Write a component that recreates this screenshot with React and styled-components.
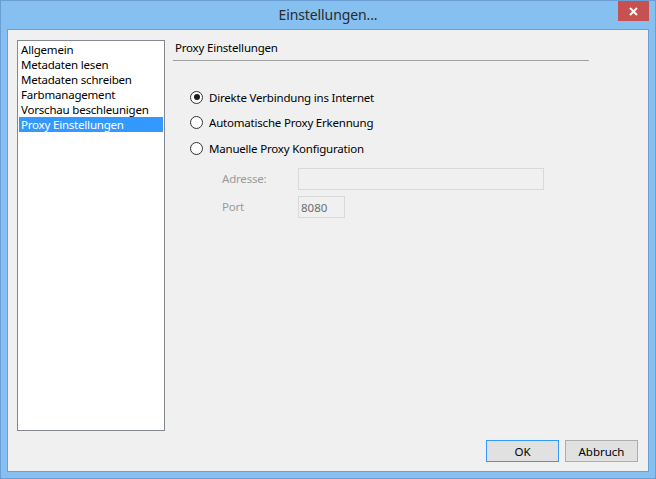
import React, { useState } from "react";
import styled, { createGlobalStyle } from "styled-components";

const GlobalStyle = createGlobalStyle`
  html, body {
    margin: 0;
    padding: 0;
    background: #85c0f1;
  }
  * {
    box-sizing: border-box;
  }
`;

const pages = [
  "Allgemein",
  "Metadaten lesen",
  "Metadaten schreiben",
  "Farbmanagement",
  "Vorschau beschleunigen",
  "Proxy Einstellungen",
];

const modes = [
  "Direkte Verbindung ins Internet",
  "Automatische Proxy Erkennung",
  "Manuelle Proxy Konfiguration",
];

const App = () => {
  const [page, setPage] = useState(5);
  const [mode, setMode] = useState(0);

  return (
    <>
      <GlobalStyle />
      <StWindow>
        <StTitleBar>
          <StTitle>Einstellungen...</StTitle>
          <StClose aria-label="Schließen">
            <svg width="9" height="9" viewBox="0 0 9 9">
              <path d="M1 1L8 8M8 1L1 8" stroke="#fff" strokeWidth="2" />
            </svg>
          </StClose>
        </StTitleBar>
        <StClient>
          <StList>
            {pages.map((p, i) => (
              <StListItem key={p} $selected={i === page} onClick={() => setPage(i)}>
                {p}
              </StListItem>
            ))}
          </StList>
          <StPanel>
            <StHeader>Proxy Einstellungen</StHeader>
            <StRadioGroup>
              {modes.map((m, i) => (
                <StRadioRow key={m} onClick={() => setMode(i)}>
                  <StRadio $checked={i === mode} />
                  <span>{m}</span>
                </StRadioRow>
              ))}
            </StRadioGroup>
            <StFields>
              <StFieldLabel>Adresse:</StFieldLabel>
              <StInput $width={246} disabled defaultValue="" />
              <StFieldLabel>Port</StFieldLabel>
              <StInput $width={47} disabled defaultValue="8080" />
            </StFields>
          </StPanel>
          <StFooter>
            <StButton $default>OK</StButton>
            <StButton>Abbruch</StButton>
          </StFooter>
        </StClient>
      </StWindow>
    </>
  );
};

export default App;

const StWindow = styled.div`
  width: 656px;
  height: 479px;
  border: 1px solid #6a9ed4;
  background: #85c0f1;
  padding: 0 6px 6px 6px;
  display: flex;
  flex-direction: column;
  font-family: "Noto Sans", "Open Sans", sans-serif;
  font-size: 11.5px;
  letter-spacing: -0.2px;
  color: #000;
`;

const StTitleBar = styled.div`
  position: relative;
  height: 28px;
  display: flex;
  align-items: center;
  justify-content: center;
`;

const StTitle = styled.div`
  font-size: 14px;
  letter-spacing: -0.1px;
  color: #2b2b2b;
  margin-top: -2px;
`;

const StClose = styled.button`
  position: absolute;
  top: 0;
  right: 0;
  width: 31px;
  height: 20px;
  border: none;
  padding: 0;
  background: #c75050;
  display: flex;
  align-items: center;
  justify-content: center;
`;

const StClient = styled.div`
  flex: 1;
  border: 1px solid #6f9fd2;
  background: #f0f0f0;
  padding: 10px 10px 9px 9px;
  display: grid;
  grid-template-columns: 148px 1fr;
  grid-template-rows: 391px 22px;
  row-gap: 9px;
  column-gap: 8px;
`;

const StList = styled.div`
  background: #fff;
  border: 1px solid #828790;
  padding: 1px 1px;
  display: flex;
  flex-direction: column;
`;

const StListItem = styled.div`
  height: 15px;
  line-height: 15px;
  padding-left: 2px;
  white-space: nowrap;
  cursor: default;
  background: ${(p) => (p.$selected ? "#3399ff" : "transparent")};
  color: ${(p) => (p.$selected ? "#fff" : "#000")};
`;

const StPanel = styled.div`
  display: flex;
  flex-direction: column;
`;

const StHeader = styled.div`
  width: 416px;
  height: 21px;
  padding: 0 0 0 2px;
  line-height: 16px;
  border-bottom: 1px solid #a0a0a0;
`;

const StRadioGroup = styled.div`
  display: flex;
  flex-direction: column;
  gap: 9.5px;
  margin: 28px 0 0 17px;
`;

const StRadioRow = styled.div`
  display: flex;
  align-items: center;
  gap: 6px;
  height: 16px;
  cursor: default;
`;

const StRadio = styled.span`
  width: 13px;
  height: 13px;
  border-radius: 50%;
  border: 1px solid #333;
  background: #fff;
  display: flex;
  align-items: center;
  justify-content: center;
  &::after {
    content: "";
    width: 6px;
    height: 6px;
    border-radius: 50%;
    background: #1b1b1b;
    display: ${(p) => (p.$checked ? "block" : "none")};
  }
`;

const StFields = styled.div`
  display: grid;
  grid-template-columns: 76px auto;
  grid-auto-rows: 22px;
  row-gap: 6px;
  align-items: center;
  justify-items: start;
  margin: 12px 0 0 49px;
  color: #9a9a9a;
`;

const StFieldLabel = styled.span`
  padding-bottom: 2px;
`;

const StInput = styled.input`
  width: ${(p) => p.$width}px;
  height: 22px;
  border: 1px solid #d9d9d9;
  background: #f0f0f0;
  font: inherit;
  color: #6d6d6d;
  padding: 0 2px;
  outline: none;
`;

const StFooter = styled.div`
  grid-column: 1 / 3;
  display: flex;
  justify-content: flex-end;
  gap: 6px;
`;

const StButton = styled.button`
  width: 73px;
  height: 22px;
  font: inherit;
  color: #000;
  background: #e1e1e1;
  border: 1px solid ${(p) => (p.$default ? "#3399ff" : "#adadad")};
  padding: 0;
`;
